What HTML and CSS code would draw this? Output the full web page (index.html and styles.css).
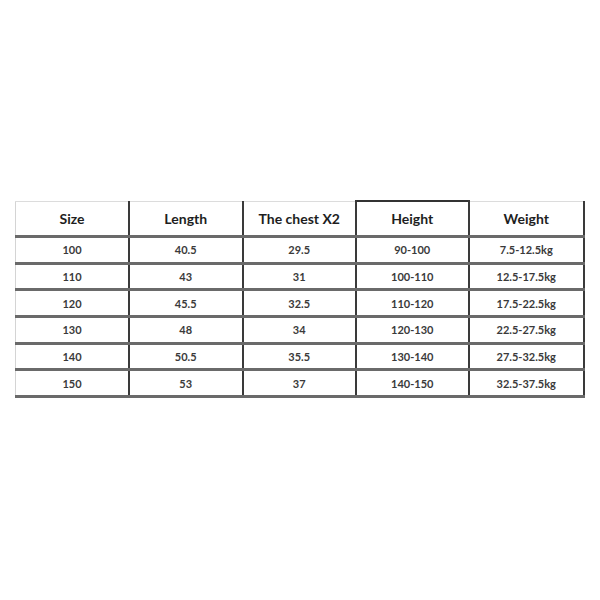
FILE: index.html
```html
<!DOCTYPE html>
<html>
<head>
<meta charset="utf-8">
<link rel="stylesheet" href="styles.css">
</head>
<body>
<div class="page">
<table class="size-table">
  <colgroup>
    <col class="c1"><col class="c2"><col class="c3"><col class="c4"><col class="c5">
  </colgroup>
  <thead>
    <tr>
      <th>Size</th><th>Length</th><th>The chest X2</th><th class="boxed">Height</th><th>Weight</th>
    </tr>
  </thead>
  <tbody>
    <tr><td>100</td><td>40.5</td><td>29.5</td><td>90-100</td><td>7.5-12.5kg</td></tr>
    <tr><td>110</td><td>43</td><td>31</td><td>100-110</td><td>12.5-17.5kg</td></tr>
    <tr><td>120</td><td>45.5</td><td>32.5</td><td>110-120</td><td>17.5-22.5kg</td></tr>
    <tr><td>130</td><td>48</td><td>34</td><td>120-130</td><td>22.5-27.5kg</td></tr>
    <tr><td>140</td><td>50.5</td><td>35.5</td><td>130-140</td><td>27.5-32.5kg</td></tr>
    <tr><td>150</td><td>53</td><td>37</td><td>140-150</td><td>32.5-37.5kg</td></tr>
  </tbody>
</table>
</div>
</body>
</html>
```
FILE: styles.css
```css
html, body {
  margin: 0;
  padding: 0;
  background: #fff;
}
.page {
  width: 600px;
  height: 600px;
  display: flex;
  justify-content: center;
  align-items: flex-start;
  padding-top: 200px;
  box-sizing: border-box;
}
.size-table {
  border-collapse: collapse;
  table-layout: fixed;
  width: 568px;
  font-family: Lato, "Liberation Sans", sans-serif;
  color: #262626;
}
.c1 { width: 113px; }
.c2 { width: 114px; }
.c3 { width: 113px; }
.c4 { width: 113px; }
.c5 { width: 115px; }
.size-table th,
.size-table td {
  padding: 0;
  text-align: center;
  border-left: 2px solid #3a3a3a;
  border-right: 2px solid #3a3a3a;
  border-bottom: 3px solid #6a6a6a;
}
.size-table th:first-child,
.size-table td:first-child {
  border-left: 1px solid #d4d4d4;
}
.size-table th {
  height: 33px;
  font-size: 14px;
  font-weight: 700;
  border-top: 1px solid #dcdcdc;
  color: #1e1e1e;
}
.size-table th.boxed {
  border-top: 2px solid #333;
}
.size-table td {
  height: 23.67px;
  font-size: 11px;
  font-weight: 700;
  color: #3a3a3a;
}
```
